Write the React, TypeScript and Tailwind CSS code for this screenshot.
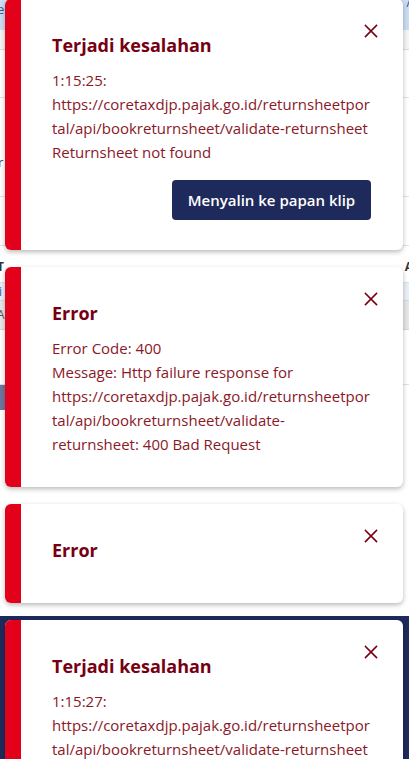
import React from "react";

const XIcon = () => (
  <svg width="14" height="14" viewBox="0 0 14 14" fill="none" stroke="#7a0011" strokeWidth="1.6" strokeLinecap="square">
    <line x1="1.5" y1="1.5" x2="12.5" y2="12.5" />
    <line x1="12.5" y1="1.5" x2="1.5" y2="12.5" />
  </svg>
);

type ToastProps = {
  title: string;
  lines?: string[];
  button?: boolean;
  pb: string;
};

const Toast = ({ title, lines, button, pb }: ToastProps) => (
  <div className="relative flex w-[398px] shrink-0 overflow-hidden rounded-[6px] bg-white shadow-[0_2px_5px_rgba(0,0,0,0.28)]">
    <div className="w-[16px] shrink-0 bg-[#e3001b]" />
    <div className={`flex flex-1 flex-col pl-[31px] pr-[32px] pt-[34px] ${pb}`}>
      <div className="text-[18px] font-bold leading-[24px] text-[#760011]">{title}</div>
      {lines && (
        <div className="mt-[11px] text-[15px] leading-[24px] text-[#8a1828]">
          {lines.map((l, i) => (
            <div key={i} className="whitespace-nowrap">
              {l}
            </div>
          ))}
        </div>
      )}
      {button && (
        <div className="mt-[16px] flex justify-end">
          <button className="flex h-[40px] w-[199px] items-center justify-center rounded-[4px] bg-[#1f2a5c] text-[15px] font-semibold text-white">
            Menyalin ke papan klip
          </button>
        </div>
      )}
    </div>
    <button className="absolute right-[25px] top-[25px] flex items-center justify-center">
      <XIcon />
    </button>
  </div>
);

export default function App() {
  return (
    <div className="relative h-[759px] w-[409px] overflow-hidden bg-white font-['Open_Sans',sans-serif]">
      {/* Underlying page */}
      <div className="flex h-full flex-col text-[13px]">
        <div className="flex h-[30px] shrink-0 items-start justify-between bg-[#cadcf2] px-0 text-[#2b5aa0]">
          <span className="-ml-[3px] mt-[1px] leading-[16px]">e</span>
          <span className="-mt-[6px] mr-[-2px] leading-[16px]">/</span>
        </div>
        <div className="h-[20px] shrink-0 border-b border-[#dcdcdc] bg-[#f4f4f4]" />
        <div className="h-[48px] shrink-0 border-b border-[#e0e0e0] bg-white" />
        <div className="flex h-[99px] shrink-0 items-end border-b border-[#e0e0e0] bg-white pb-[26px] text-[#444]">
          <span className="-ml-[2px] leading-[16px]">r</span>
        </div>
        <div className="h-[49px] shrink-0 border-b border-[#e0e0e0] bg-white" />
        <div className="flex h-[37px] shrink-0 items-end justify-between border-b border-[#e0e0e0] bg-white pb-[8px] text-[12px] font-bold text-[#333]">
          <span className="-ml-[3px] leading-[14px]">T</span>
          <span className="-mr-[4px] leading-[14px]">A</span>
        </div>
        <div className="flex h-[18px] shrink-0 items-center border-b border-[#d8d8d8] bg-[#e9eff8] text-[12px] text-[#2b5aa0]">
          <span className="-ml-[1px] leading-[14px]">i</span>
        </div>
        <div className="flex h-[29px] shrink-0 items-center border-b border-[#d5d5d5] bg-[#e6e6e6] text-[12px] text-[#555]">
          <span className="-ml-[3px] leading-[14px]">A</span>
        </div>
        <div className="h-[55px] shrink-0 border-b border-[#e0e0e0] bg-white" />
        <div className="flex h-[25px] shrink-0 bg-white">
          <div className="w-[8px] bg-[#6e779c]" />
        </div>
        <div className="flex-1 bg-white" />
        <div className="h-[143px] shrink-0 bg-[#1f2a5c]" />
      </div>

      {/* Toast stack overlay */}
      <div className="absolute left-[5px] top-[-1px] flex flex-col gap-[17px]">
        <Toast
          title="Terjadi kesalahan"
          lines={[
            "1:15:25:",
            "https://coretaxdjp.pajak.go.id/returnsheetpor",
            "tal/api/bookreturnsheet/validate-returnsheet",
            "Returnsheet not found",
          ]}
          button
          pb="pb-[30px]"
        />
        <Toast
          title="Error"
          lines={[
            "Error Code: 400",
            "Message: Http failure response for",
            "https://coretaxdjp.pajak.go.id/returnsheetpor",
            "tal/api/bookreturnsheet/validate-",
            "returnsheet: 400 Bad Request",
          ]}
          pb="pb-[31px]"
        />
        <Toast title="Error" pb="pb-[41px]" />
        <Toast
          title="Terjadi kesalahan"
          lines={[
            "1:15:27:",
            "https://coretaxdjp.pajak.go.id/returnsheetpor",
            "tal/api/bookreturnsheet/validate-returnsheet",
            "Returnsheet not found",
          ]}
          button
          pb="pb-[30px]"
        />
      </div>
    </div>
  );
}
